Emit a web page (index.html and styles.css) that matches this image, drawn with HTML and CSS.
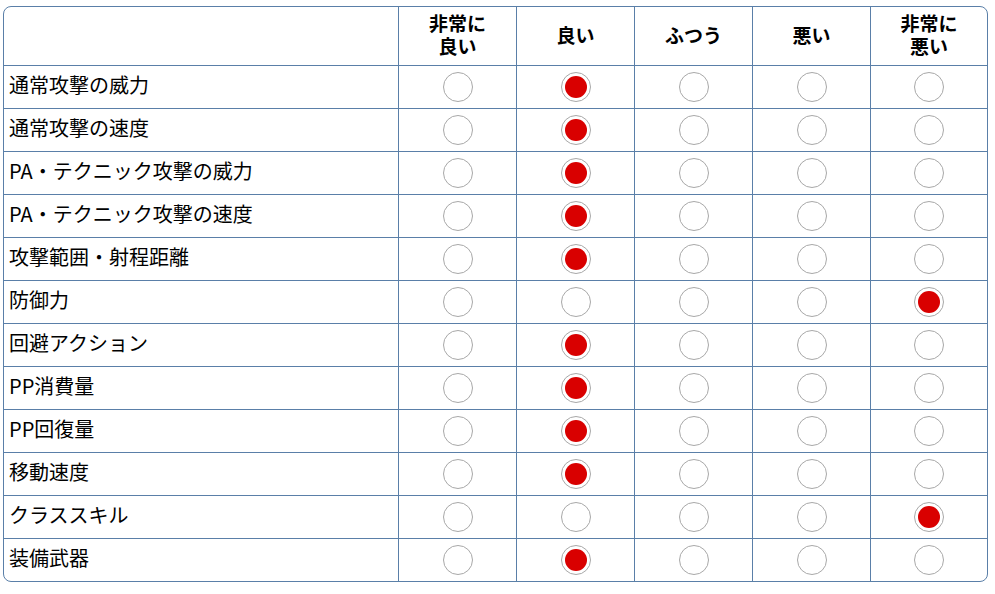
FILE: index.html
```html
<!DOCTYPE html>
<html lang="ja">
<head>
<meta charset="utf-8">
<link rel="stylesheet" href="styles.css">
</head>
<body>
<div class="grid">
  <div class="hd first"></div>
  <div class="hd">非常に<br>良い</div>
  <div class="hd">良い</div>
  <div class="hd">ふつう</div>
  <div class="hd">悪い</div>
  <div class="hd">非常に<br>悪い</div>

  <div class="lb">通常攻撃の威力</div><div class="c"><span class="r"></span></div><div class="c"><span class="r on"></span></div><div class="c"><span class="r"></span></div><div class="c"><span class="r"></span></div><div class="c"><span class="r"></span></div>
  <div class="lb">通常攻撃の速度</div><div class="c"><span class="r"></span></div><div class="c"><span class="r on"></span></div><div class="c"><span class="r"></span></div><div class="c"><span class="r"></span></div><div class="c"><span class="r"></span></div>
  <div class="lb">PA・テクニック攻撃の威力</div><div class="c"><span class="r"></span></div><div class="c"><span class="r on"></span></div><div class="c"><span class="r"></span></div><div class="c"><span class="r"></span></div><div class="c"><span class="r"></span></div>
  <div class="lb">PA・テクニック攻撃の速度</div><div class="c"><span class="r"></span></div><div class="c"><span class="r on"></span></div><div class="c"><span class="r"></span></div><div class="c"><span class="r"></span></div><div class="c"><span class="r"></span></div>
  <div class="lb">攻撃範囲・射程距離</div><div class="c"><span class="r"></span></div><div class="c"><span class="r on"></span></div><div class="c"><span class="r"></span></div><div class="c"><span class="r"></span></div><div class="c"><span class="r"></span></div>
  <div class="lb">防御力</div><div class="c"><span class="r"></span></div><div class="c"><span class="r"></span></div><div class="c"><span class="r"></span></div><div class="c"><span class="r"></span></div><div class="c"><span class="r on"></span></div>
  <div class="lb">回避アクション</div><div class="c"><span class="r"></span></div><div class="c"><span class="r on"></span></div><div class="c"><span class="r"></span></div><div class="c"><span class="r"></span></div><div class="c"><span class="r"></span></div>
  <div class="lb">PP消費量</div><div class="c"><span class="r"></span></div><div class="c"><span class="r on"></span></div><div class="c"><span class="r"></span></div><div class="c"><span class="r"></span></div><div class="c"><span class="r"></span></div>
  <div class="lb">PP回復量</div><div class="c"><span class="r"></span></div><div class="c"><span class="r on"></span></div><div class="c"><span class="r"></span></div><div class="c"><span class="r"></span></div><div class="c"><span class="r"></span></div>
  <div class="lb">移動速度</div><div class="c"><span class="r"></span></div><div class="c"><span class="r on"></span></div><div class="c"><span class="r"></span></div><div class="c"><span class="r"></span></div><div class="c"><span class="r"></span></div>
  <div class="lb">クラススキル</div><div class="c"><span class="r"></span></div><div class="c"><span class="r"></span></div><div class="c"><span class="r"></span></div><div class="c"><span class="r"></span></div><div class="c"><span class="r on"></span></div>
  <div class="lb">装備武器</div><div class="c"><span class="r"></span></div><div class="c"><span class="r on"></span></div><div class="c"><span class="r"></span></div><div class="c"><span class="r"></span></div><div class="c"><span class="r"></span></div>
</div>
</body>
</html>
```
FILE: styles.css
```css
html, body {
  margin: 0;
  padding: 0;
  background: #fff;
}
body {
  padding: 6px 0 0 3px;
  font-family: "Noto Sans CJK JP", "Noto Sans", sans-serif;
  color: #000;
}
.grid {
  width: 983px;
  border: 1px solid #5a7fa8;
  border-radius: 8px;
  overflow: hidden;
  display: grid;
  grid-template-columns: 394px repeat(4, 118px) 117px;
  grid-template-rows: 58px repeat(12, 43px);
}
.hd {
  border-left: 1px solid #5a7fa8;
  display: flex;
  align-items: center;
  justify-content: center;
  text-align: center;
  font-weight: bold;
  font-size: 19px;
  line-height: 23px;
  padding-bottom: 4px;
}
.hd.first {
  border-left: none;
}
.lb {
  border-top: 1px solid #5a7fa8;
  display: flex;
  align-items: center;
  padding-left: 5px;
  padding-bottom: 4px;
  font-size: 20px;
  line-height: 24px;
}
.c {
  border-top: 1px solid #5a7fa8;
  border-left: 1px solid #5a7fa8;
  display: flex;
  align-items: center;
  justify-content: center;
}
.r {
  box-sizing: border-box;
  width: 30px;
  height: 30px;
  border: 1px solid #a8a8a8;
  border-radius: 50%;
  background: #fff;
  display: flex;
  align-items: center;
  justify-content: center;
}
.r.on::after {
  content: "";
  width: 22px;
  height: 22px;
  border-radius: 50%;
  background: #d90000;
}
```
